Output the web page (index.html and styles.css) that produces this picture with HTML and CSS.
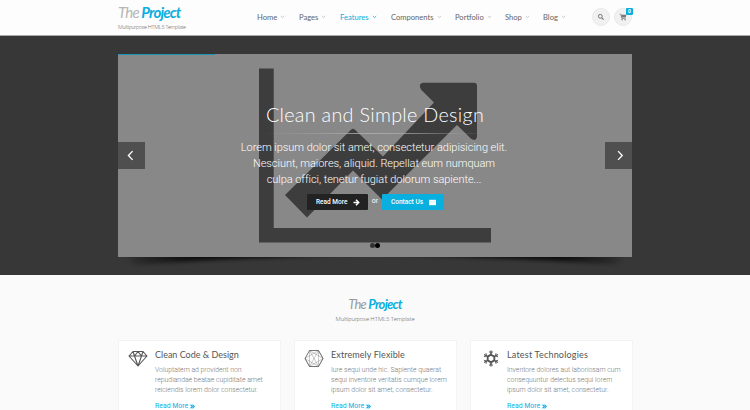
FILE: index.html
```html
<!DOCTYPE html>
<html lang="en">
<head>
<meta charset="utf-8">
<title>The Project</title>
<link rel="stylesheet" href="styles.css">
</head>
<body>
<header class="header">
  <div class="brand">
    <div class="logo"><span class="logo-the">The</span> <span class="logo-project">Project</span></div>
    <div class="tagline">Multipurpose HTML5 Template</div>
  </div>
  <nav class="nav">
    <a class="n-home">Home<svg viewBox="0 0 5 4"><path d="M.8 1 2.5 2.6 4.2 1"/></svg></a>
    <a class="n-pages">Pages<svg viewBox="0 0 5 4"><path d="M.8 1 2.5 2.6 4.2 1"/></svg></a>
    <a class="n-features active">Features<svg viewBox="0 0 5 4"><path d="M.8 1 2.5 2.6 4.2 1"/></svg></a>
    <a class="n-components">Components<svg viewBox="0 0 5 4"><path d="M.8 1 2.5 2.6 4.2 1"/></svg></a>
    <a class="n-portfolio">Portfolio<svg viewBox="0 0 5 4"><path d="M.8 1 2.5 2.6 4.2 1"/></svg></a>
    <a class="n-shop">Shop<svg viewBox="0 0 5 4"><path d="M.8 1 2.5 2.6 4.2 1"/></svg></a>
    <a class="n-blog">Blog<svg viewBox="0 0 5 4"><path d="M.8 1 2.5 2.6 4.2 1"/></svg></a>
  </nav>
  <div class="tools">
    <span class="tool"><svg viewBox="0 0 8 8"><circle cx="3.3" cy="3.3" r="1.9" fill="none" stroke="#777" stroke-width="1"/><path d="M4.8 4.8 6.6 6.6" stroke="#777" stroke-width="1.2"/></svg></span>
    <span class="tool"><svg viewBox="0 0 8 8"><path d="M.7 1.2h1.2l.9 4.3h3.7" fill="none" stroke="#777" stroke-width=".7"/><path d="M2.1 1.8h5.2l-.5 2.8H2.6z" fill="#777"/><circle cx="3.1" cy="6.7" r=".7" fill="#777"/><circle cx="6.1" cy="6.7" r=".7" fill="#777"/></svg><b class="badge">0</b></span>
  </div>
</header>

<section class="hero">
  <div class="slider">
    <svg class="chart" viewBox="0 0 514 203">
      <path d="M141 14.500h14.700V174H373v14.500H141z"/>
      <path d="M167 141 233 75.800q2-2 4 0L265 102.500 316 48.500 303 35.500q-3-6 2-6.700h51q3 0 3 3v51q-1 5-6 2L339 71 264 145.500 235 116.500 189 163.500z"/>
    </svg>
    <i class="progress"></i>
    <button class="arrow"><svg viewBox="0 0 10 10"><path d="M6 1 2.200 5 6 9"/></svg></button>
    <div class="caption">
      <h1>Clean and Simple Design</h1>
      <hr>
      <p><span class="l1">Lorem ipsum dolor sit amet, consectetur adipisicing elit.</span><br><span class="l2">Nesciunt, maiores, aliquid. Repellat eum numquam</span><br><span class="l3">culpa offici, tenetur fugiat dolorum sapiente...</span></p>
      <div class="actions">
        <a class="btn dark">Read More<svg viewBox="0 0 7 7"><path d="M.5 3.500h5M3 .8l2.700 2.700L3 6.200" fill="none" stroke="#fff" stroke-width="1.500"/></svg></a>
        <span class="or">or</span>
        <a class="btn blue">Contact Us<svg viewBox="0 0 7 7"><path d="M0 .8h7v5.400H0z" fill="#fff"/><path d="m0 1.500 3.500 2.300L7 1.500" fill="none" stroke="#8bd5ee" stroke-width=".4"/></svg></a>
      </div>
      <div class="dots"><i></i><i></i></div>
    </div>
    <button class="arrow"><svg viewBox="0 0 10 10"><path d="m4.600 1 3.800 4-3.800 4"/></svg></button>
  </div>
  <svg class="shadow" viewBox="0 0 514 18">
    <defs>
      <linearGradient id="sl"><stop offset="0" stop-color="#000" stop-opacity=".1"/><stop offset=".25" stop-color="#000" stop-opacity=".75"/><stop offset=".6" stop-color="#000" stop-opacity=".8"/><stop offset="1" stop-color="#000" stop-opacity=".2"/></linearGradient>
      <filter id="soft" x="-5%" y="-50%" width="110%" height="200%"><feGaussianBlur stdDeviation="4 2.200"/></filter>
    </defs>
    <g fill="url(#sl)" filter="url(#soft)">
      <path d="M8-6H250V-2Q120 0 16 8z"/>
      <path d="M8-6H250V-2Q120 0 16 8z" transform="matrix(-1 0 0 1 514 0)"/>
    </g>
  </svg>
</section>

<main class="main">
  <div class="intro">
    <div class="logo small"><span class="logo-the">The</span> <span class="logo-project">Project</span></div>
    <div class="tagline wide">Multipurpose HTML5 Template</div>
  </div>
  <div class="cards">
    <article class="card">
      <svg class="icon" viewBox="0 0 20 20"><g fill="none" stroke="#555" stroke-width="1.100" stroke-linejoin="round"><path d="M5 2.500h10l4 4.500L10 17 1 7zM1 7h18M5 2.500 6.500 7 10 17l3.500-10L15 2.500M6.500 7 10 2.500 13.500 7"/></g></svg>
      <div class="body"><h2 class="t1">Clean Code &amp; Design</h2>
      <p class="p1">Voluptatem ad provident non<br>repudiandae beatae cupiditate amet<br>reiciendis lorem dolor consectetur.</p>
      <a class="more">Read More<svg viewBox="0 0 5 5"><path d="m.5.7 1.800 1.800L.5 4.300M2.500.7l1.800 1.800-1.800 1.800"/></svg></a></div>
    </article>
    <article class="card">
      <svg class="icon" viewBox="0 0 20 20"><g fill="none" stroke="#666" stroke-linejoin="round"><path d="M5.500 1.500h9l4.500 8-4.500 8h-9L1 9.500z" stroke-width=".9"/><path d="m5.500 1.500 9 16M14.500 1.500l-9 16M1 9.500 14.500 1.500 19 9.500 5.500 17.500zM5.500 1.500 19 9.500l-4.500 8L1 9.500M5.500 1.500v16M14.500 1.500v16" stroke-width=".35"/></g></svg>
      <div class="body"><h2 class="t2">Extremely Flexible</h2>
      <p class="p2">Iure sequi unde hic. Sapiente quaerat<br>sequi inventore veritatis cumque lorem<br>ipsum dolor sit amet, consectetur.</p>
      <a class="more">Read More<svg viewBox="0 0 5 5"><path d="m.5.7 1.800 1.800L.5 4.300M2.500.7l1.800 1.800-1.800 1.800"/></svg></a></div>
    </article>
    <article class="card">
      <svg class="icon" viewBox="0 0 20 20"><g fill="none" stroke="#555" transform="translate(1 -.5)"><path d="m10 6.200 3.300 1.900v3.800L10 13.800l-3.300-1.900V8.100z" stroke-width="1.900"/><path d="M10 2v4M10 14v4M3.100 6l3.400 2M13.500 12l3.400 2M3.100 14l3.400-2M13.500 8l3.400-2" stroke-width="1.400"/><path d="m8 3 2 1.800L12 3M8 17l2-1.800 2 1.800M2.900 8.300l2.600-.9L5 4.800M17.100 8.300l-2.600-.9.500-2.600M2.900 11.700l2.600.9-.5 2.600M17.100 11.700l-2.600.9.500 2.600" stroke-width="1"/></g></svg>
      <div class="body"><h2 class="t3">Latest Technologies</h2>
      <p class="p3">Inventore dolores aut laboriosam cum<br>consequuntur delectus sequi lorem<br>ipsum dolor sit amet, consectetur.</p>
      <a class="more">Read More<svg viewBox="0 0 5 5"><path d="m.5.7 1.800 1.800L.5 4.300M2.500.7l1.800 1.800-1.800 1.800"/></svg></a></div>
    </article>
  </div>
</main>
</body>
</html>
```
FILE: styles.css
```css
* { box-sizing: border-box; }
body { margin: 0; width: 750px; height: 410px; overflow: hidden; background: #fafafa; font-family: Roboto, "Liberation Sans", sans-serif; color: #777; }
svg { display: block; flex: none; }

.header { display: flex; height: 36px; padding-left: 118px; background: #fdfdfd; border-bottom: 1px solid #aaa; }
.brand { width: 139px; padding-top: 3px; }
.logo { font: italic 700 15px/18px Lato, sans-serif; letter-spacing: -.8px; white-space: nowrap; }
.logo-the { color: #b5b5b5; font-weight: 400; }
.logo-project { color: #09afdf; }
.tagline { font-size: 5.500px; line-height: 8px; font-weight: 300; letter-spacing: -.26px; white-space: nowrap; margin-top: 2px; }
.nav { display: flex; width: 335px; height: 34px; align-items: center; }
.nav a { display: flex; align-items: center; flex: none; gap: 3px; font: 400 7.600px/10px Lato, sans-serif; color: #666; white-space: nowrap; }
.nav svg { width: 5px; height: 4px; fill: none; stroke: #bbb; stroke-width: .8; }
.nav .active { color: #09afdf; }
.nav .active svg { stroke: #09afdf; }
.n-home { width: 42px; }
.n-pages { width: 41px; }
.n-features { width: 51px; }
.n-components { width: 64px; }
.n-portfolio { width: 50px; }
.n-shop { width: 38px; }
.tools { display: flex; gap: 4px; padding-top: 8px; }
.tool { position: relative; display: flex; align-items: center; justify-content: center; width: 18px; height: 18px; border-radius: 50%; background: #f1f1f1; border: 1px solid #eaeaea; }
.tool svg { width: 8px; height: 8px; }
.badge { position: absolute; right: -2px; top: -1px; width: 7px; height: 7px; border-radius: 1px; background: #09afdf; color: #fff; font-size: 5px; line-height: 7px; text-align: center; }

.hero { height: 239px; padding: 18px 118px 0; background: #373737; }
.slider { position: relative; display: flex; align-items: center; justify-content: space-between; height: 203px; background: #888; }
.chart { position: absolute; inset: 0; width: 514px; height: 203px; fill: #3d3d3d; }
.progress { position: absolute; left: 0; top: 0; width: 97px; height: 1px; background: #1a95b5; }
.arrow { position: relative; display: flex; align-items: center; justify-content: center; width: 27px; height: 27px; padding: 0; border: 0; background: #4f4f4f; }
.arrow svg { width: 11px; height: 11px; fill: none; stroke: #fff; stroke-width: 1.200; }
.caption { position: relative; display: flex; flex-direction: column; align-items: center; height: 203px; padding-top: 47px; color: #fff; text-align: center; }
h1 { margin: 0; font: 300 19.800px/26px Lato, sans-serif; letter-spacing: .3px; white-space: nowrap; }
hr { width: 220px; height: 1px; margin: 6px 0 5px; border: 0; background: linear-gradient(90deg, transparent, #aaa, transparent); }
.caption p { margin: 1px 2px 0 0; font-size: 11px; line-height: 16px; font-weight: 300; letter-spacing: -.035px; white-space: nowrap; }
.l3 { letter-spacing: -.05px; }
.actions { display: flex; align-items: center; margin: 6px 0 0 1px; height: 16px; }
.btn { display: flex; align-items: center; justify-content: space-between; height: 16px; padding: 0 8px 0 9px; border-radius: 1px; font-size: 6.500px; font-weight: 500; }
.btn svg { width: 7px; height: 7px; }
.dark { width: 61px; background: #222; }
.blue { width: 62px; background: #09afdf; }
.or { width: 14px; font-size: 7px; line-height: 12px; margin-bottom: 2px; }
.dots { display: flex; margin: 33px 0 0 1px; }
.dots i { width: 5px; height: 5px; border-radius: 50%; background: #333; }
.dots i + i { background: #000; }
.shadow { width: 514px; height: 18px; overflow: hidden; }

.intro { display: flex; flex-direction: column; align-items: center; height: 65px; padding-top: 20px; }
.small { font-size: 13px; letter-spacing: -.75px; }
.small .logo-the { color: #999; }
.wide { margin-top: 2px; font-size: 6px; letter-spacing: -.1px; }
.cards { display: grid; grid-template-columns: repeat(3, 163px); gap: 13px; padding-left: 118px; }
.card { display: flex; height: 70px; padding: 8px 0 0 9px; background: #fff; border: 1px solid #f3f3f3; border-bottom: 0; }
.icon { width: 20px; height: 20px; }
.body { padding-left: 7px; }
h2 { margin: 0; font: 400 9px/12px Lato, sans-serif; color: #555; white-space: nowrap; }
.t2 { letter-spacing: .1px; }
.t3 { letter-spacing: .2px; }
.card p { margin: 4px 0 0; font-size: 6.900px; line-height: 10px; font-weight: 300; letter-spacing: -.02px; white-space: nowrap; }
.more { display: flex; align-items: center; gap: 2px; margin-top: 6px; font-size: 6.900px; line-height: 10px; color: #09afdf; }
.more svg { width: 5px; height: 5px; fill: none; stroke: #09afdf; stroke-width: 1.100; }
```
